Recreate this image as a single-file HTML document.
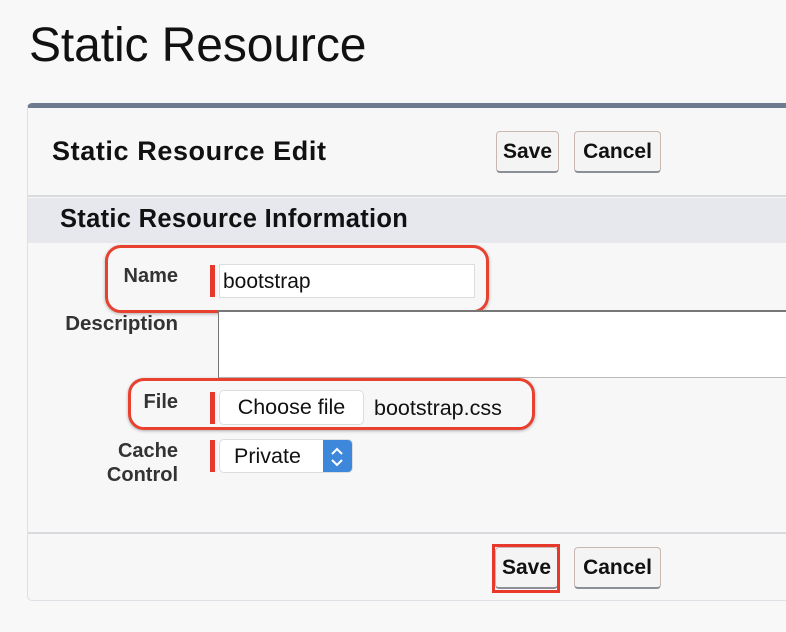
<!DOCTYPE html>
<html><head><meta charset="utf-8"><style>
*{margin:0;padding:0;box-sizing:border-box}
body{width:786px;height:632px;background:#f8f8f8;font-family:"Liberation Sans",Arial,sans-serif;position:relative;overflow:hidden;color:#222}
.a{position:absolute}
h1{position:absolute;left:29px;top:18px;font-size:48px;font-weight:normal;color:#111;letter-spacing:-0.1px}
.panel{left:27px;top:103px;width:800px;height:498px;border:1px solid #dde0e4;border-top:5px solid #6f7c90;border-radius:5px 0 0 5px;background:#f7f7f7}
.btn{position:absolute;background:#f4f4f4;border:1px solid #c8b8b0;border-bottom:2px solid #8c8f96;border-radius:4px;font-weight:bold;font-size:21px;text-align:center;color:#111}
.lbl{position:absolute;font-weight:bold;font-size:20px;color:#333;text-align:right}
.bar{position:absolute;left:210px;width:5px;background:#e8382b}
.oval{position:absolute;border:3px solid #e8412f;border-radius:16px;box-shadow:0 1px 3px rgba(0,0,0,.3)}
</style></head><body>
<h1>Static Resource</h1>
<div class="a panel"></div>
<div class="a" style="left:52px;top:136px;font-size:27px;font-weight:bold;color:#111;letter-spacing:0.6px">Static Resource Edit</div>
<div class="btn" style="left:496px;top:131px;width:63px;height:42px;line-height:40px">Save</div>
<div class="btn" style="left:574px;top:131px;width:87px;height:42px;line-height:40px">Cancel</div>
<div class="a" style="left:28px;top:195px;width:760px;height:2px;background:#d8dadd"></div>
<div class="a" style="left:28px;top:198px;width:760px;height:45px;background:#e6e8ee"></div>
<div class="a" style="left:60px;top:205px;font-size:25.5px;font-weight:bold;color:#111;letter-spacing:0.3px">Static Resource Information</div>

<div class="lbl" style="left:80px;top:265px;width:98px">Name</div>
<div class="bar" style="top:265px;height:32px"></div>
<div class="a" style="left:219px;top:264px;width:256px;height:34px;background:#fff;border:1px solid #ddd;font-size:21px;line-height:34px;padding-left:3px;color:#111">bootstrap</div>
<div class="oval" style="left:105px;top:245px;width:384px;height:68px"></div>

<div class="lbl" style="left:30px;top:312px;width:148px;font-size:20.5px">Description</div>
<div class="a" style="left:218px;top:310px;width:580px;height:68px;background:#fff;border-top:2px solid #777;border-left:1px solid #777;border-bottom:1px solid #bbb"></div>

<div class="lbl" style="left:80px;top:391px;width:98px">File</div>
<div class="bar" style="top:392px;height:32px"></div>
<div class="a" style="left:219px;top:390px;width:145px;height:35px;background:#fff;border:1px solid #ddd;border-radius:5px;font-size:21.5px;line-height:33px;text-align:center;color:#111">Choose file</div>
<div class="a" style="left:374px;top:396px;font-size:21.5px;color:#111">bootstrap.css</div>
<div class="oval" style="left:128px;top:378px;width:407px;height:52px"></div>

<div class="lbl" style="left:40px;top:439px;width:138px;line-height:24px">Cache<br>Control</div>
<div class="bar" style="top:440px;height:32px"></div>
<div class="a" style="left:219px;top:439px;width:134px;height:34px;background:#fff;border:1px solid #ddd;border-radius:5px;overflow:hidden;font-size:21.5px;line-height:32px;padding-left:14px;color:#111">Private
<div class="a" style="right:0;top:0;width:29px;height:34px;background:#3e88dc"><svg width="29" height="34" viewBox="0 0 29 34"><path d="M9 14l5-5 5 5M9 20l5 5 5-5" stroke="#fff" stroke-width="2" fill="none"/></svg></div></div>

<div class="a" style="left:28px;top:532px;width:760px;height:2px;background:#d8dadd"></div>
<div class="btn" style="left:495px;top:547px;width:63px;height:42px;line-height:40px">Save</div>
<div class="a" style="left:492px;top:544px;width:68px;height:49px;border:3px solid #e8382b"></div>
<div class="btn" style="left:574px;top:547px;width:87px;height:42px;line-height:40px">Cancel</div>
</body></html>
